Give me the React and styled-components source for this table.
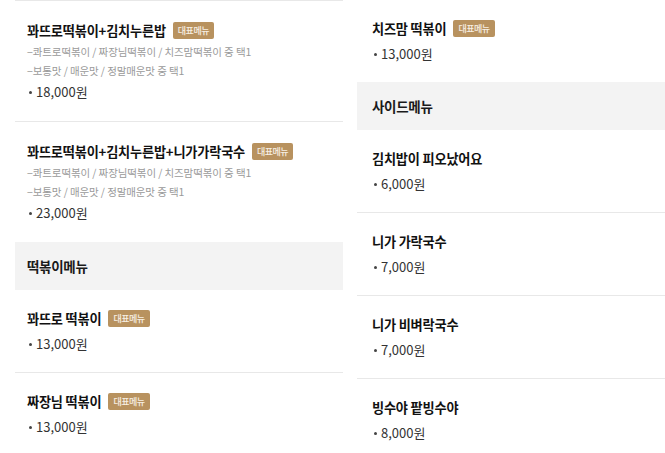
import styled, { createGlobalStyle } from "styled-components";

const GlobalStyle = createGlobalStyle`
  html, body {
    margin: 0;
    padding: 0;
    background: #fff;
    overflow: hidden;
  }
  body {
    font-family: "Noto Sans CJK KR", "Noto Sans", sans-serif;
    color: #111;
  }
`;

const Page = styled.div`
  display: grid;
  grid-template-columns: 328px 328px;
  column-gap: 14px;
  padding-left: 15px;
  width: 665px;
  height: 453px;
  overflow: hidden;
  box-sizing: border-box;
`;

const Column = styled.div`
  display: flex;
  flex-direction: column;
  border-top: ${(p) => (p.$rule ? "1px solid #e8e8e8" : "none")};
`;

const SectionHeader = styled.div`
  height: 48px;
  display: flex;
  align-items: center;
  padding-left: ${(p) => p.$inset}px;
  background: #f3f3f3;
  font-size: 13.5px;
  font-weight: 700;
  color: #1a1a1a;
  letter-spacing: -0.3px;
`;

const Item = styled.div`
  padding: ${(p) => (p.$tall ? 18 : 17)}px 0 ${(p) => (p.$tall ? 18 : 17)}px
    ${(p) => p.$inset}px;
  border-bottom: ${(p) => (p.$last ? "none" : "1px solid #e8e8e8")};
`;

const TitleRow = styled.div`
  display: flex;
  align-items: center;
  height: 22px;
`;

const Title = styled.span`
  font-size: 13.2px;
  font-weight: 700;
  color: #111;
  letter-spacing: -0.2px;
`;

const Badge = styled.span`
  margin-left: 7px;
  padding: 0 5px;
  height: 17px;
  display: inline-flex;
  align-items: center;
  background: #b8925f;
  color: #f7efe3;
  font-size: 9px;
  font-weight: 500;
  border-radius: 2px;
  letter-spacing: -0.5px;
`;

const Options = styled.div`
  margin-top: 1px;
  font-size: 10.5px;
  line-height: 19px;
  color: #9a9a9a;
  letter-spacing: -0.1px;
`;

const Price = styled.div`
  margin-top: ${(p) => (p.$afterOptions ? 1 : 4)}px;
  font-size: 13px;
  line-height: 22px;
  color: #333;
`;

const Dot = styled.span`
  display: inline-block;
  width: 3px;
  height: 3px;
  margin: 0 4px 0 2px;
  background: #444;
  border-radius: 50%;
  vertical-align: middle;
  position: relative;
  top: -1px;
`;

const left = [
  { type: "rule" },
  {
    name: "꽈뜨로떡볶이+김치누른밥",
    badge: true,
    options: ["−콰트로떡볶이 / 짜장님떡볶이 / 치즈맘떡볶이 중 택1", "−보통맛 / 매운맛 / 정말매운맛 중 택1"],
    price: "18,000원",
  },
  {
    name: "꽈뜨로떡볶이+김치누른밥+니가가락국수",
    badge: true,
    options: ["−콰트로떡볶이 / 짜장님떡볶이 / 치즈맘떡볶이 중 택1", "−보통맛 / 매운맛 / 정말매운맛 중 택1"],
    price: "23,000원",
    last: true,
  },
  { type: "header", name: "떡볶이메뉴" },
  { name: "꽈뜨로 떡볶이", badge: true, price: "13,000원" },
  { name: "짜장님 떡볶이", badge: true, price: "13,000원" },
];

const right = [
  { name: "치즈맘 떡볶이", badge: true, price: "13,000원", last: true },
  { type: "header", name: "사이드메뉴" },
  { name: "김치밥이 피오났어요", price: "6,000원" },
  { name: "니가 가락국수", price: "7,000원" },
  { name: "니가 비벼락국수", price: "7,000원" },
  { name: "빙수야 팥빙수야", price: "8,000원" },
];

const MenuColumn = ({ rows, inset }) => (
  <Column $rule={rows[0].type === "rule"}>
    {rows
      .filter((r) => r.type !== "rule")
      .map((r) =>
        r.type === "header" ? (
          <SectionHeader key={r.name} $inset={inset}>
            {r.name}
          </SectionHeader>
        ) : (
          <Item key={r.name} $inset={inset} $tall={!!r.options} $last={r.last}>
            <TitleRow>
              <Title>{r.name}</Title>
              {r.badge && <Badge>대표메뉴</Badge>}
            </TitleRow>
            {r.options && (
              <Options>
                {r.options.map((o) => (
                  <div key={o}>{o}</div>
                ))}
              </Options>
            )}
            <Price $afterOptions={!!r.options}>
              <Dot />
              {r.price}
            </Price>
          </Item>
        )
      )}
  </Column>
);

export default function App() {
  return (
    <>
      <GlobalStyle />
      <Page>
        <MenuColumn rows={left} inset={12} />
        <MenuColumn rows={right} inset={15} />
      </Page>
    </>
  );
}
